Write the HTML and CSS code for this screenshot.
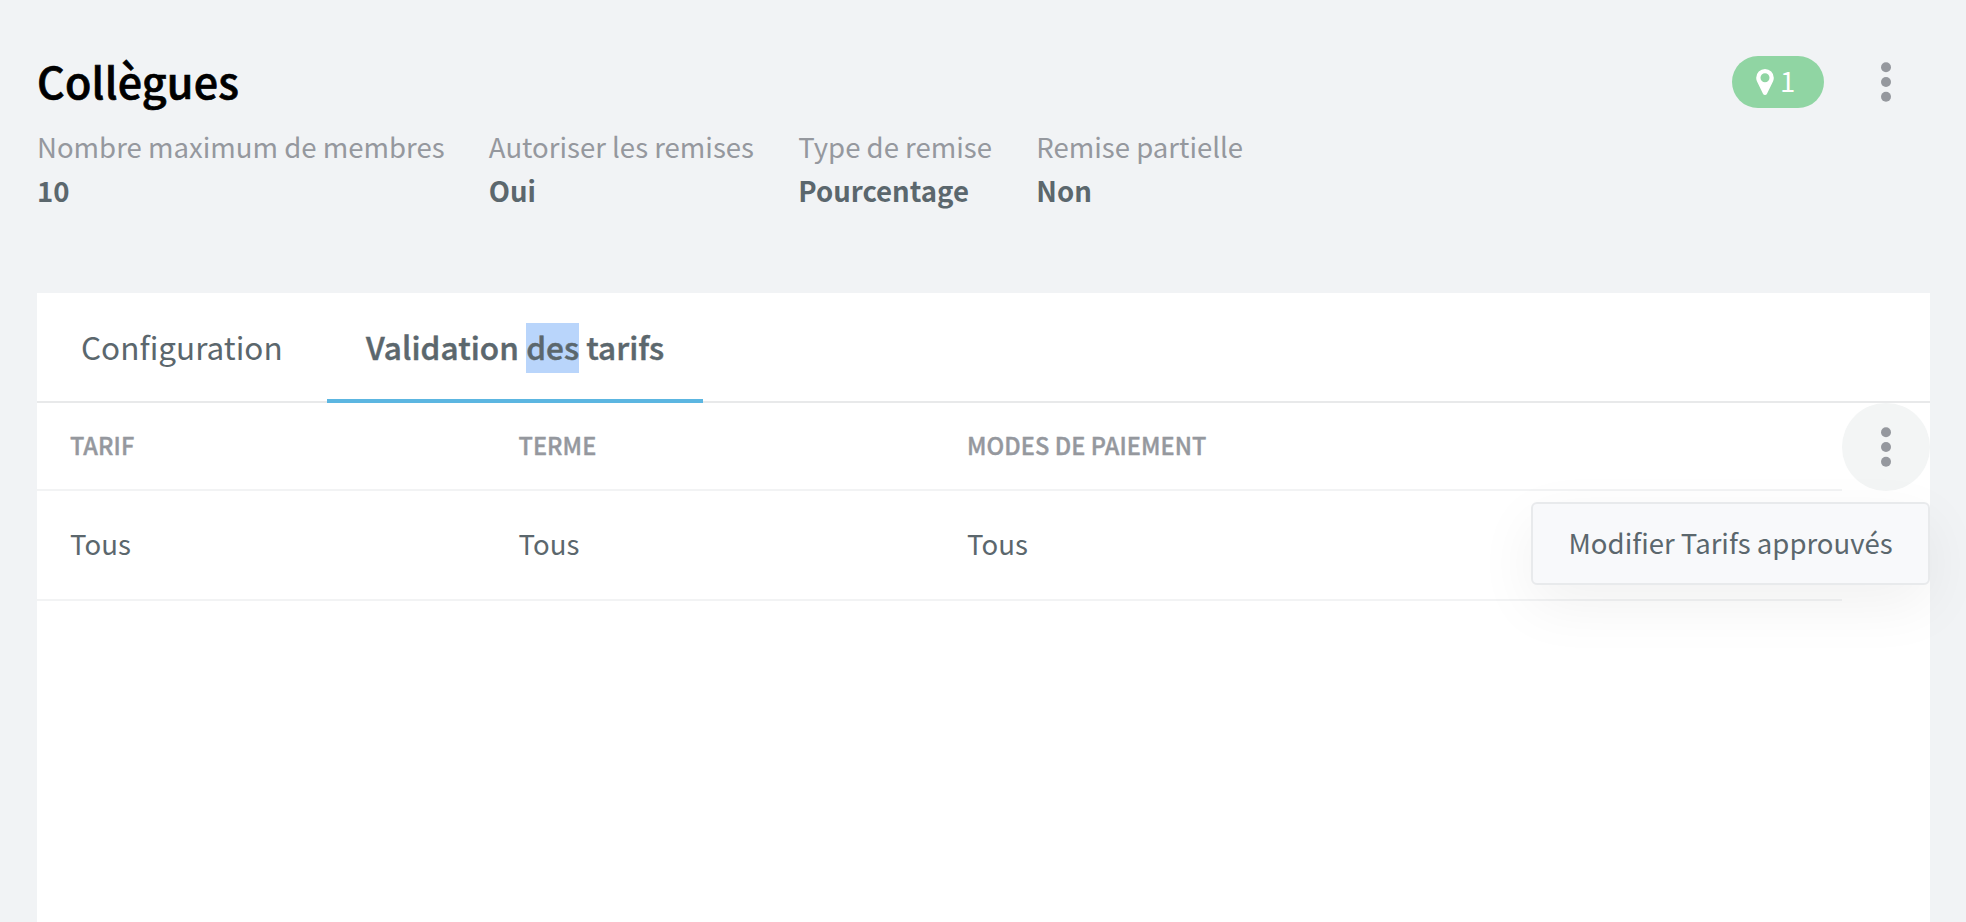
FILE: index.html
```html
<!DOCTYPE html>
<html lang="fr">
<head>
  <meta charset="utf-8">
  <title>Collègues</title>
  <link rel="stylesheet" href="styles.css">
</head>
<body>
  <header class="header">
    <div>
      <h1>Collègues</h1>
      <dl class="details">
        <div>
          <dt>Nombre maximum de membres</dt>
          <dd>10</dd>
        </div>
        <div>
          <dt>Autoriser les remises</dt>
          <dd>Oui</dd>
        </div>
        <div>
          <dt>Type de remise</dt>
          <dd>Pourcentage</dd>
        </div>
        <div>
          <dt>Remise partielle</dt>
          <dd>Non</dd>
        </div>
      </dl>
    </div>
    <div class="actions">
      <span class="badge">
        <svg class="pin" viewBox="0 0 18 26">
          <path fill="#fff" fill-rule="evenodd" d="M9 0a8.800 8.800 0 0 1 8.800 8.800c0 1.300-.2 2.400-.7 3.500L11 24.700a2.200 2.200 0 0 1-4 0L.9 12.300C.4 11.200.2 10.100.2 8.800A8.800 8.800 0 0 1 9 0zm0 4.300a4.500 4.500 0 1 0 0 9 4.500 4.500 0 0 0 0-9z"/>
        </svg>
        <span class="count">1</span>
      </span>
      <button class="more">
        <svg width="10" height="40" viewBox="0 0 10 40" fill="#95989e">
          <circle cx="5" cy="5.300" r="5"/>
          <circle cx="5" cy="20" r="5"/>
          <circle cx="5" cy="34.700" r="5"/>
        </svg>
      </button>
    </div>
  </header>

  <main class="panel">
    <nav class="tabs">
      <a class="tab">Configuration</a>
      <a class="tab active">Validation <span class="selected">des</span> tarifs</a>
    </nav>
    <div class="content">
      <table>
        <tr>
          <th>TARIF</th>
          <th>TERME</th>
          <th>MODES DE PAIEMENT</th>
          <th class="last"></th>
        </tr>
        <tr>
          <td>Tous</td>
          <td>Tous</td>
          <td>Tous</td>
          <td class="last"></td>
        </tr>
      </table>
      <div class="dropdown">
        <button class="more open">
          <svg width="10" height="40" viewBox="0 0 10 40" fill="#95989e">
            <circle cx="5" cy="5.300" r="5"/>
            <circle cx="5" cy="20" r="5"/>
            <circle cx="5" cy="34.700" r="5"/>
          </svg>
        </button>
        <div class="menu">Modifier Tarifs approuvés</div>
      </div>
    </div>
  </main>
</body>
</html>
```
FILE: styles.css
```css
* {
  box-sizing: border-box;
}

body {
  margin: 0;
  height: 922px;
  overflow: hidden;
  display: flex;
  flex-direction: column;
  background-color: #f1f3f5;
  color: #5b676d;
  font-family: "Source Sans Pro", "Noto Sans CJK SC", sans-serif;
  font-size: 27.56px;
}

.header {
  display: flex;
  justify-content: space-between;
  height: 293px;
  padding: 38px 36px 0 37px;
}

h1 {
  margin: 12px 0 14px;
  color: #000;
  font-size: 43px;
  font-weight: 500;
  line-height: 60px;
  letter-spacing: 0.2px;
  -webkit-text-stroke: 0.7px;
}

.details {
  display: flex;
  gap: 44.3px;
  margin: 0;
  line-height: 44px;
}

dt {
  color: #95989e;
}

dd {
  margin: 0;
  font-weight: 700;
}

.actions {
  display: flex;
  align-items: center;
  gap: 18px;
  height: 88px;
}

.badge {
  display: flex;
  align-items: center;
  gap: 6px;
  width: 92px;
  height: 52px;
  padding-left: 24px;
  border-radius: 26px;
  background-color: #90d5a3;
  color: #fff;
}

.count {
  padding-bottom: 5px;
}

.pin {
  width: 18px;
  height: 26px;
}

.more {
  display: flex;
  align-items: center;
  justify-content: center;
  width: 88px;
  height: 88px;
  padding: 0;
  border: none;
  border-radius: 50%;
  background: none;
}

.more.open {
  background-color: #f3f5f5;
}

.panel {
  flex: 1;
  margin: 0 36px 0 37px;
  background-color: #fff;
}

.tabs {
  display: flex;
  height: 110px;
  border-bottom: 2px solid #e8e9ea;
  font-size: 31.5px;
  line-height: 106px;
}

.tab {
  height: 110px;
  width: 290px;
  padding-left: 44px;
}

.tab.active {
  width: 376px;
  padding-left: 39px;
  border-bottom: 4px solid #5cb6e1;
  font-weight: 500;
  letter-spacing: 0.06px;
  white-space: nowrap;
  -webkit-text-stroke: 0.5px;
}

.selected {
  padding: 0 0 4px;
  background-color: #b9d5fb;
}

.content {
  display: flex;
}

table {
  flex: 1;
  table-layout: fixed;
  border-collapse: separate;
  border-spacing: 0;
}

th,
td {
  width: 448.5px;
  padding: 0 0 2px 33px;
  border-bottom: 2px solid #f2f3f4;
  text-align: left;
}

th {
  height: 88px;
  color: #95989e;
  font-size: 23.5px;
  font-weight: 500;
  letter-spacing: 0.07px;
  -webkit-text-stroke: 0.4px;
}

td {
  height: 110px;
  padding-bottom: 4px;
}

.last {
  width: auto;
}

.dropdown {
  position: relative;
  width: 88px;
}

.menu {
  position: absolute;
  top: 99px;
  right: 0;
  width: 399px;
  height: 83px;
  padding-left: 35.5px;
  border: 2px solid #e8eaec;
  border-radius: 6px;
  background-color: #f8f9fb;
  box-shadow: 0 20px 60px rgba(0, 0, 0, 0.06);
  line-height: 77px;
  white-space: nowrap;
}
```
